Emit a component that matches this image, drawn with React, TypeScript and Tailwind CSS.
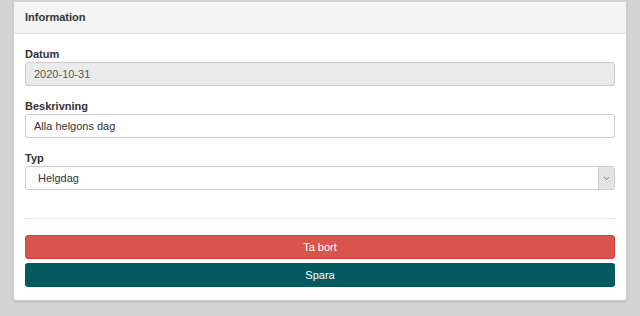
import { ChevronDown } from 'lucide-react';

const Field = ({ label, children }: { label: string; children: React.ReactNode }) => (
  <div className="flex flex-col">
    <label className="text-[11px] font-bold text-[#333] leading-[13px] mb-px">{label}</label>
    {children}
  </div>
);

const App = () => {
  return (
    <div className="min-h-[316px] bg-[#d4d4d4] px-[13px] pt-px" style={{ fontFamily: '"Liberation Sans", Arial, sans-serif' }}>
      <div className="bg-white border border-[#d0d0d0] rounded-b-[3px] shadow-[0_1px_2px_rgba(0,0,0,0.15)]">
        {/* Header */}
        <div className="h-[32px] bg-[#f4f4f4] border-b border-[#dddddd] flex items-center px-[11px]">
          <span className="text-[11px] font-bold text-[#333]">Information</span>
        </div>

        <div className="px-[11px] pt-[14px] pb-[13px]">
          <div className="flex flex-col gap-[14px]">
            <Field label="Datum">
              <div className="h-[24px] bg-[#ebebeb] border border-[#cccccc] rounded-[3px] flex items-center px-[8px] text-[11px] text-[#555]">
                2020-10-31
              </div>
            </Field>
            <Field label="Beskrivning">
              <div className="h-[24px] bg-white border border-[#cccccc] rounded-[3px] flex items-center px-[8px] text-[11px] text-[#333]">
                Alla helgons dag
              </div>
            </Field>
            <Field label="Typ">
              <div className="h-[24px] bg-white border border-[#cccccc] rounded-[3px] flex items-stretch text-[11px] text-[#333]">
                <div className="flex-1 flex items-center px-[12px]">Helgdag</div>
                <div className="w-[16px] bg-[#e3e3e3] border-l border-[#cccccc] flex items-center justify-center">
                  <ChevronDown className="w-[9px] h-[9px] text-[#555]" strokeWidth={2} />
                </div>
              </div>
            </Field>
          </div>

          <div className="border-t border-[#e8e8e8] mt-[28px] mb-[16px]" />

          <div className="flex flex-col gap-[4px]">
            <button className="h-[24px] bg-[#d9534f] border border-[#d43f3a] rounded-[3px] text-white text-[11px]">Ta bort</button>
            <button className="h-[24px] bg-[#055a60] rounded-[3px] text-white text-[11px]">Spara</button>
          </div>
        </div>
      </div>
    </div>
  );
};

export default App;
